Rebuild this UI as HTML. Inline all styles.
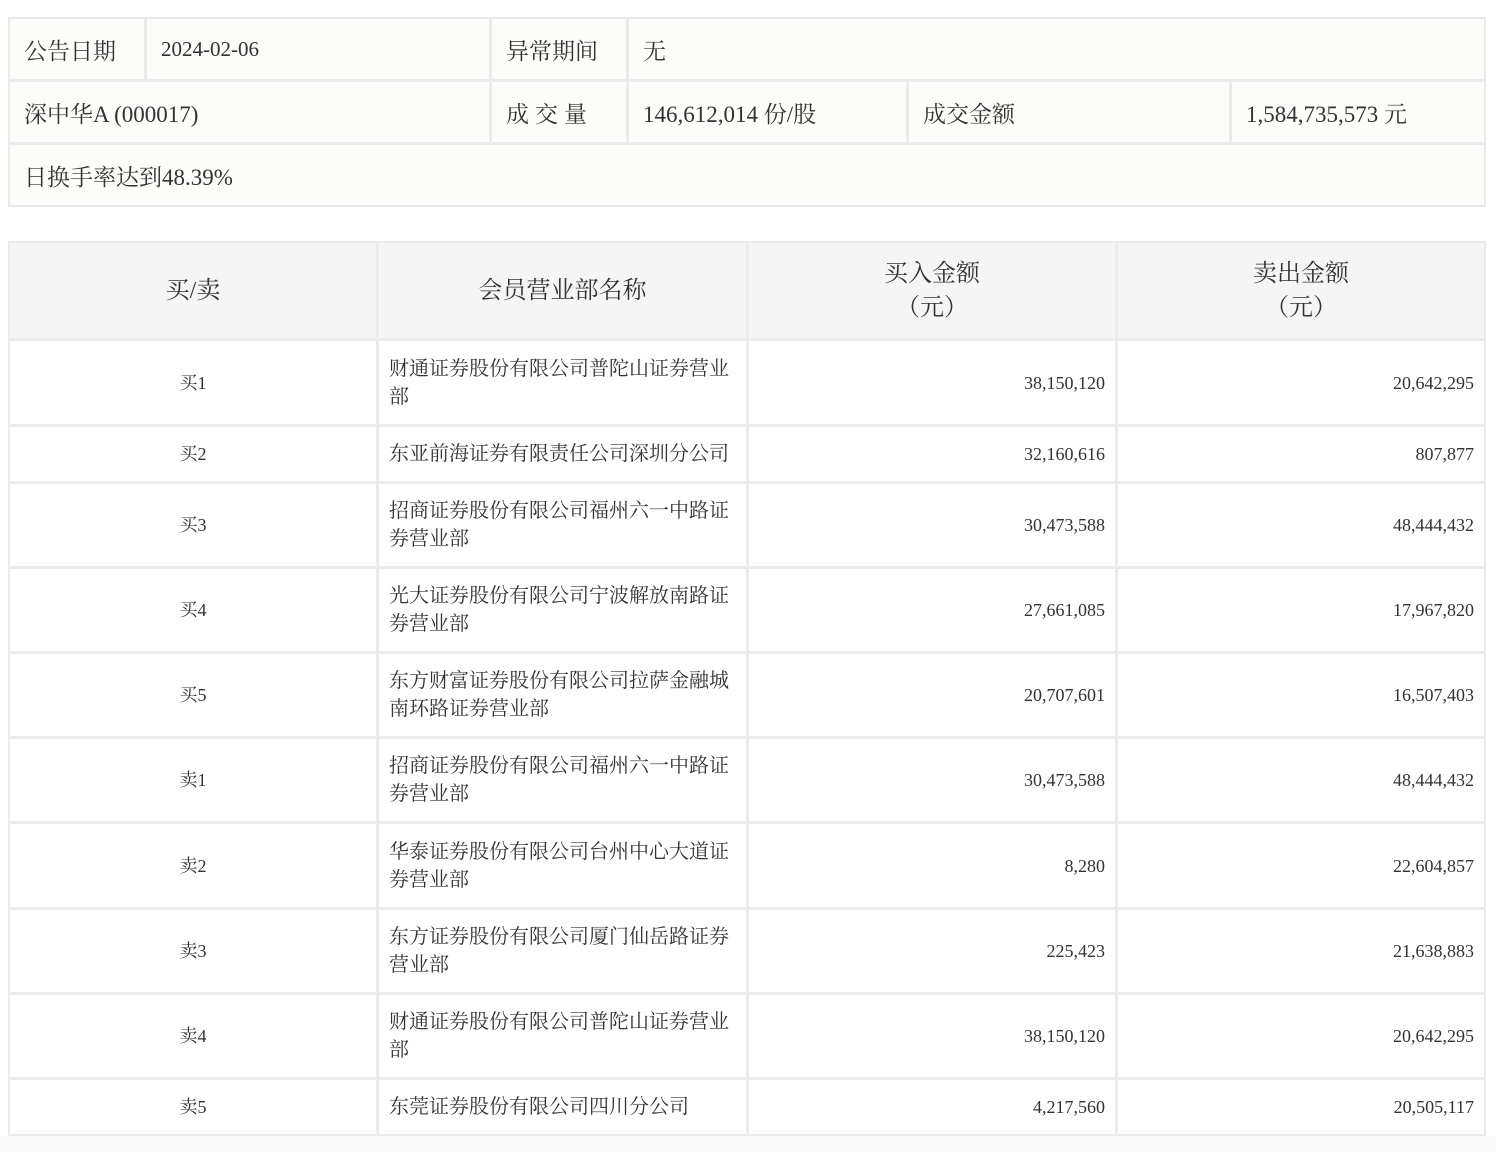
<!DOCTYPE html>
<html><head><meta charset="utf-8"><style>
body{margin:0;width:1496px;height:1152px;background:#fff;position:relative;font-family:"Liberation Serif","Noto Serif CJK SC",serif;color:#333;overflow:hidden}
.bg{position:absolute;background:#ebebeb}
.c{position:absolute;display:flex;align-items:center;box-sizing:border-box;background:#fcfcfa;font-size:23px;padding-left:14px}
.t{position:absolute;display:flex;align-items:center;box-sizing:border-box;background:#fff;font-size:18px;line-height:28px}
.h{background:#f5f5f5;font-size:24px;justify-content:center;text-align:center;line-height:34px}
.a{justify-content:center}
.n{padding:0 10px;font-size:20px}
.r{justify-content:flex-end;padding-right:10px}
</style></head><body>
<div style="position:absolute;left:0;top:1136px;width:1496px;height:16px;background:#fafafa"></div>
<div class="bg" style="left:8px;top:17px;width:1478px;height:190px"></div>
<div class="c" style="left:10px;top:19px;width:134px;height:60px">公告日期</div>
<div class="c" style="left:147px;top:19px;width:342px;height:60px;font-size:21px">2024-02-06</div>
<div class="c" style="left:492px;top:19px;width:134px;height:60px">异常期间</div>
<div class="c" style="left:629px;top:19px;width:855px;height:60px">无</div>
<div class="c" style="left:10px;top:82px;width:479px;height:60px">深中华A (000017)</div>
<div class="c" style="left:492px;top:82px;width:134px;height:60px;letter-spacing:6px">成交量</div>
<div class="c" style="left:629px;top:82px;width:277px;height:60px">146,612,014 份/股</div>
<div class="c" style="left:909px;top:82px;width:320px;height:60px">成交金额</div>
<div class="c" style="left:1232px;top:82px;width:252px;height:60px">1,584,735,573 元</div>
<div class="c" style="left:10px;top:145px;width:1474px;height:60px">日换手率达到48.39%</div>

<div class="bg" style="left:8px;top:241px;width:1478px;height:895px"></div>
<div class="t h" style="left:10px;top:243px;width:366px;height:95px">买/卖</div>
<div class="t h" style="left:379px;top:243px;width:367px;height:95px">会员营业部名称</div>
<div class="t h" style="left:749px;top:243px;width:366px;height:95px">买入金额<br>（元）</div>
<div class="t h" style="left:1118px;top:243px;width:366px;height:95px">卖出金额<br>（元）</div>

<div class="t a" style="left:10px;top:341px;width:366px;height:83px">买1</div>
<div class="t n" style="left:379px;top:341px;width:367px;height:83px">财通证券股份有限公司普陀山证券营业部</div>
<div class="t r" style="left:749px;top:341px;width:366px;height:83px">38,150,120</div>
<div class="t r" style="left:1118px;top:341px;width:366px;height:83px">20,642,295</div>

<div class="t a" style="left:10px;top:427px;width:366px;height:54px">买2</div>
<div class="t n" style="left:379px;top:427px;width:367px;height:54px">东亚前海证券有限责任公司深圳分公司</div>
<div class="t r" style="left:749px;top:427px;width:366px;height:54px">32,160,616</div>
<div class="t r" style="left:1118px;top:427px;width:366px;height:54px">807,877</div>

<div class="t a" style="left:10px;top:484px;width:366px;height:82px">买3</div>
<div class="t n" style="left:379px;top:484px;width:367px;height:82px">招商证券股份有限公司福州六一中路证券营业部</div>
<div class="t r" style="left:749px;top:484px;width:366px;height:82px">30,473,588</div>
<div class="t r" style="left:1118px;top:484px;width:366px;height:82px">48,444,432</div>

<div class="t a" style="left:10px;top:569px;width:366px;height:82px">买4</div>
<div class="t n" style="left:379px;top:569px;width:367px;height:82px">光大证券股份有限公司宁波解放南路证券营业部</div>
<div class="t r" style="left:749px;top:569px;width:366px;height:82px">27,661,085</div>
<div class="t r" style="left:1118px;top:569px;width:366px;height:82px">17,967,820</div>

<div class="t a" style="left:10px;top:654px;width:366px;height:82px">买5</div>
<div class="t n" style="left:379px;top:654px;width:367px;height:82px">东方财富证券股份有限公司拉萨金融城南环路证券营业部</div>
<div class="t r" style="left:749px;top:654px;width:366px;height:82px">20,707,601</div>
<div class="t r" style="left:1118px;top:654px;width:366px;height:82px">16,507,403</div>

<div class="t a" style="left:10px;top:739px;width:366px;height:82px">卖1</div>
<div class="t n" style="left:379px;top:739px;width:367px;height:82px">招商证券股份有限公司福州六一中路证券营业部</div>
<div class="t r" style="left:749px;top:739px;width:366px;height:82px">30,473,588</div>
<div class="t r" style="left:1118px;top:739px;width:366px;height:82px">48,444,432</div>

<div class="t a" style="left:10px;top:824px;width:366px;height:83px">卖2</div>
<div class="t n" style="left:379px;top:824px;width:367px;height:83px">华泰证券股份有限公司台州中心大道证券营业部</div>
<div class="t r" style="left:749px;top:824px;width:366px;height:83px">8,280</div>
<div class="t r" style="left:1118px;top:824px;width:366px;height:83px">22,604,857</div>

<div class="t a" style="left:10px;top:910px;width:366px;height:82px">卖3</div>
<div class="t n" style="left:379px;top:910px;width:367px;height:82px">东方证券股份有限公司厦门仙岳路证券营业部</div>
<div class="t r" style="left:749px;top:910px;width:366px;height:82px">225,423</div>
<div class="t r" style="left:1118px;top:910px;width:366px;height:82px">21,638,883</div>

<div class="t a" style="left:10px;top:995px;width:366px;height:82px">卖4</div>
<div class="t n" style="left:379px;top:995px;width:367px;height:82px">财通证券股份有限公司普陀山证券营业部</div>
<div class="t r" style="left:749px;top:995px;width:366px;height:82px">38,150,120</div>
<div class="t r" style="left:1118px;top:995px;width:366px;height:82px">20,642,295</div>

<div class="t a" style="left:10px;top:1080px;width:366px;height:54px">卖5</div>
<div class="t n" style="left:379px;top:1080px;width:367px;height:54px">东莞证券股份有限公司四川分公司</div>
<div class="t r" style="left:749px;top:1080px;width:366px;height:54px">4,217,560</div>
<div class="t r" style="left:1118px;top:1080px;width:366px;height:54px">20,505,117</div>
</body></html>
